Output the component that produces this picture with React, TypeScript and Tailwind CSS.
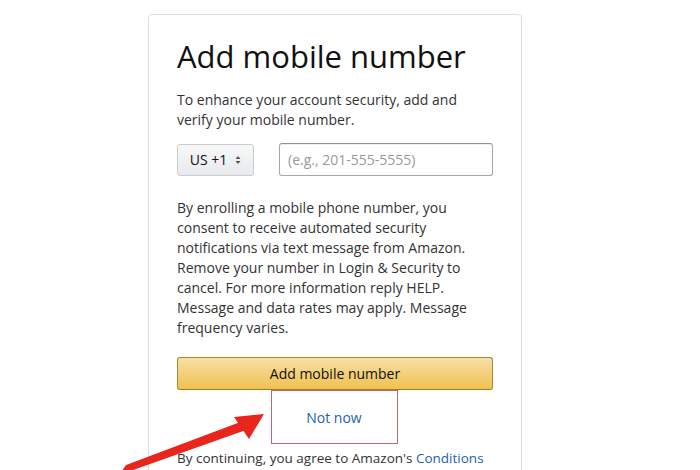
const App = () => {
  return (
    <div className="relative w-[700px] h-[470px] overflow-hidden bg-white font-['Open_Sans',sans-serif] text-[#111]">
      <div className="ml-[148px] mt-[14px] w-[374px] h-[480px] border border-[#ddd] rounded-[4px] px-[28px] pt-[21px]">
        <h1 className="text-[31px] leading-[40px] font-normal text-[#111]">Add mobile number</h1>
        <p className="mt-[14px] text-[14px] leading-[20px] text-[#333]">
          To enhance your account security, add and verify your mobile number.
        </p>
        <div className="mt-[13px] flex items-center gap-[25px]">
          <div className="w-[77px] h-[32px] flex items-center justify-center gap-[8px] rounded-[3px] border border-[#ccc] bg-gradient-to-b from-[#f7f8fa] to-[#e7e9ec] text-[14px] text-[#111]">
            <span>US +1</span>
            <svg width="6" height="10" viewBox="0 0 6 10">
              <path d="M0.5 4 L3 1 L5.5 4 Z M0.5 6 L3 9 L5.5 6 Z" fill="#555" />
            </svg>
          </div>
          <div className="w-[214px] h-[33px] flex items-center px-[8px] rounded-[3px] border border-[#a6a6a6] border-t-[#949494] shadow-[inset_0_1px_0_rgba(0,0,0,0.07)] text-[14px] text-[#999]">
            (e.g., 201-555-5555)
          </div>
        </div>
        <p className="mt-[22px] text-[14px] leading-[20px] text-[#333]">
          By enrolling a mobile phone number, you consent to receive automated security notifications via text message from Amazon. Remove your number in Login &amp; Security to cancel. For more information reply HELP. Message and data rates may apply. Message frequency varies.
        </p>
        <button className="mt-[19px] w-full h-[33px] rounded-[3px] border border-[#a88734] border-b-[#9c7e31] bg-gradient-to-b from-[#f7dfa5] to-[#f0c14b] text-[14px] text-[#111]">
          Add mobile number
        </button>
        <div className="flex justify-center">
          <div className="w-[127px] h-[54px] ml-[-2px] border border-[#c4646e] flex items-center justify-center text-[14px] text-[#1f5fa8]">
            Not now
          </div>
        </div>
        <p className="mt-[4px] text-[13.5px] leading-[20px] text-[#333] whitespace-nowrap">
          By continuing, you agree to Amazon's <span className="text-[#1f5fa8]">Conditions</span>
        </p>
      </div>
      <svg className="absolute left-0 top-0" width="700" height="470" viewBox="0 0 700 470">
        <path d="M119 475 L126 465 L243 421 L246 430 Z" fill="#e8261c" />
        <path d="M264 414 L234 417 L249 439 Z" fill="#e8261c" />
      </svg>
    </div>
  );
};

export default App;
